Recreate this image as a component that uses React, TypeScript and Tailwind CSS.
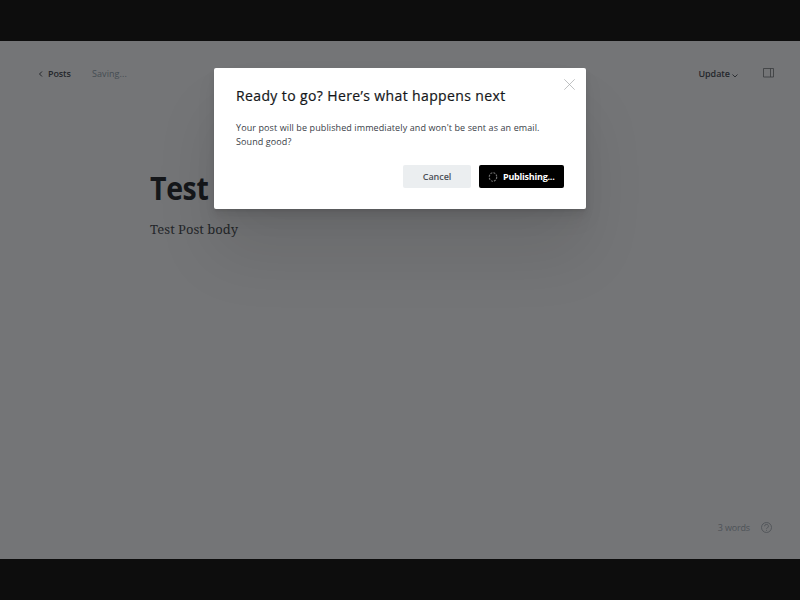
import React from "react";

function Spinner() {
  return (
    <svg width="10" height="10" viewBox="0 0 10 10" fill="none" className="shrink-0">
      <ellipse cx="5" cy="5" rx="3.700" ry="4.300" stroke="#6f6f6f" strokeWidth="1.2" strokeDasharray="2 1.14" />
    </svg>
  );
}

function EditorHeader() {
  return (
    <header className="flex h-[66px] items-center pl-[38px] pr-[26px] text-[9px] leading-[14px]">
      <svg width="5" height="8" viewBox="0 0 5 8" fill="none" className="mr-[5px]">
        <path d="M4 1.500 1.500 4 4 6.500" stroke="#24272b" strokeWidth="1" />
      </svg>
      <span className="w-[44px] font-semibold tracking-[-0.1px] text-[#24272c]">Posts</span>
      <span className="tracking-[0.08px] text-[#454d53]">Saving...</span>
      <div className="ml-auto flex items-center">
        <span className="font-semibold tracking-[-0.05px] text-[#24272c]">Update</span>
        <svg width="6" height="4" viewBox="0 0 6 4" fill="none" className="ml-[2px] mt-[3px]">
          <path d="m.5.5 2.500 2.500L5.500.5" stroke="#24272b" strokeWidth="0.9" />
        </svg>
        <svg width="11" height="10" viewBox="0 0 11 10" fill="none" className="-mt-[2px] ml-[25px]">
          <path d="M.5.5h10v8.500H.5zM7.500.5v8.500" stroke="#383b3e" strokeWidth="0.8" />
        </svg>
      </div>
    </header>
  );
}

function PublishDialog() {
  return (
    <div
      role="dialog"
      className="absolute left-[214px] top-[68px] h-[141px] w-[372px] rounded-[2px] bg-white pl-[22px] pr-[22px] pt-[18px] shadow-[0_2px_2px_rgba(0,0,0,0.05),0_5px_7px_rgba(0,0,0,0.06),0_12px_20px_rgba(0,0,0,0.06),0_46px_64px_rgba(0,0,0,0.09)]"
    >
      <svg width="11" height="11" viewBox="0 0 11 11" className="absolute right-[11px] top-[11px]">
        <path d="m.3.3 10.400 10.400M10.700.3.3 10.700" stroke="#a5a7a9" strokeWidth="0.7" />
      </svg>
      <h2 className="whitespace-nowrap text-[14px] font-medium leading-[20px] tracking-[0.38px] text-[#15171a] [-webkit-text-stroke:0.2px_#15171a]">
        Ready to go? Here’s what happens next
      </h2>
      <p className="mt-[15px] whitespace-nowrap text-[9px] leading-[14px] tracking-[0.1px] text-[#394047]">
        Your post will be published immediately and won't be sent as an email.
        <br />
        Sound good?
      </p>
      <div className="mt-[16px] flex justify-end gap-[8px] text-[9px] leading-[14px]">
        <button className="h-[23px] w-[68px] rounded-[2px] bg-[#ebeef0] font-semibold tracking-[-0.05px] text-[#4b5057]">Cancel</button>
        <button className="flex h-[23px] w-[85px] items-center rounded-[2px] bg-black pl-[9px] font-bold text-white">
          <Spinner />
          <span className="ml-[5px] tracking-[-0.24px]">Publishing...</span>
        </button>
      </div>
    </div>
  );
}

export default function App() {
  return (
    <div className="relative flex h-[600px] w-[800px] flex-col overflow-hidden bg-[#0d0d0d] py-[41px] font-['Open_Sans','Noto_Sans',sans-serif]">
      <div className="flex h-[518px] flex-col bg-[#747577]">
        <EditorHeader />
        <main className="flex-1 pl-[150px] pt-[58px]">
          <h1 className="origin-left scale-x-[0.89] text-[32px] font-bold leading-[46px] tracking-[-0.4px] text-[#15171a]">Test</h1>
          <p className="mt-[8px] font-['Noto_Serif','Liberation_Serif',serif] text-[13px] leading-[20px] text-[#24272a]">
            Test Post body
          </p>
        </main>
        <footer className="mb-[24px] flex h-[16px] items-center justify-end pr-[28px] text-[9px] leading-[14px] text-[#4e5358]">
          <span className="mt-px tracking-[-0.15px]">3 words</span>
          <svg width="11" height="11" viewBox="0 0 11 11" fill="none" className="ml-[11px]">
            <circle cx="5.500" cy="5.500" r="5" stroke="#4c5155" strokeWidth="0.8" />
            <path d="M3.600 4.300a1.900 1.900 0 1 1 2.800 1.600c-.6.300-.9.500-.9 1" stroke="#4c5155" strokeWidth="0.8" />
            <circle cx="5.500" cy="8.300" r=".5" fill="#4c5155" />
          </svg>
        </footer>
      </div>
      <PublishDialog />
    </div>
  );
}
